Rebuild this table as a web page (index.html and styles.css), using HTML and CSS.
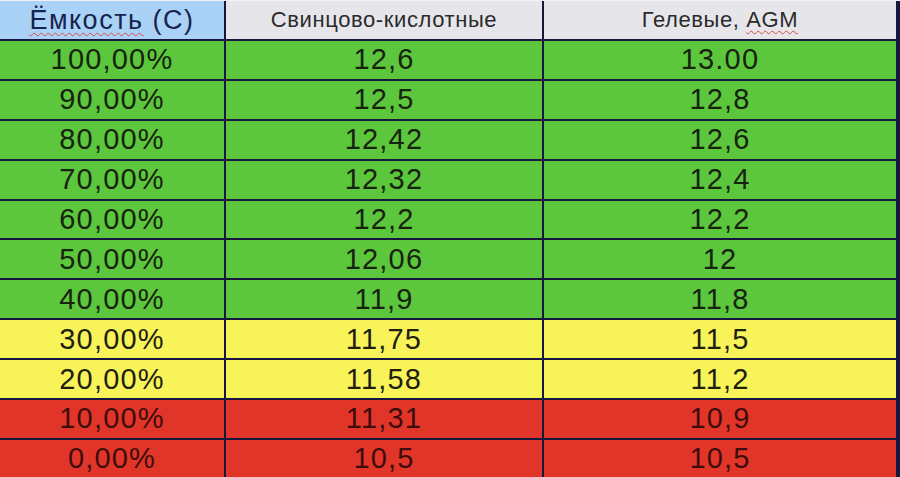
FILE: index.html
```html
<!DOCTYPE html>
<html lang="ru">
<head>
<meta charset="utf-8">
<title>Ёмкость аккумулятора</title>
<link rel="stylesheet" href="styles.css">
</head>
<body>
<div class="table">
  <div class="cell head head-a"><span><span class="spell">Ёмкость</span> (С)</span></div>
  <div class="cell head head-b">Свинцово-кислотные</div>
  <div class="cell head head-b"><span>Гелевые, <span class="spell">AGM</span></span></div>

  <div class="cell g">100,00%</div><div class="cell g">12,6</div><div class="cell g">13.00</div>
  <div class="cell g">90,00%</div><div class="cell g">12,5</div><div class="cell g">12,8</div>
  <div class="cell g">80,00%</div><div class="cell g">12,42</div><div class="cell g">12,6</div>
  <div class="cell g">70,00%</div><div class="cell g">12,32</div><div class="cell g">12,4</div>
  <div class="cell g">60,00%</div><div class="cell g">12,2</div><div class="cell g">12,2</div>
  <div class="cell g">50,00%</div><div class="cell g">12,06</div><div class="cell g">12</div>
  <div class="cell g">40,00%</div><div class="cell g">11,9</div><div class="cell g">11,8</div>
  <div class="cell y">30,00%</div><div class="cell y">11,75</div><div class="cell y">11,5</div>
  <div class="cell y">20,00%</div><div class="cell y">11,58</div><div class="cell y">11,2</div>
  <div class="cell r">10,00%</div><div class="cell r">11,31</div><div class="cell r">10,9</div>
  <div class="cell r">0,00%</div><div class="cell r">10,5</div><div class="cell r">10,5</div>
</div>
</body>
</html>
```
FILE: styles.css
```css
html, body {
  margin: 0;
  padding: 0;
  background: #ffffff;
}
body {
  width: 900px;
  height: 477px;
  overflow: hidden;
  font-family: "Liberation Sans", Arial, sans-serif;
}
.table {
  display: grid;
  grid-template-columns: 224px 316px 1fr;
  grid-template-rows: 38px repeat(11, 37.9px);
  gap: 2px;
  background: #16163e;
  width: 900px;
  height: 477px;
  box-sizing: border-box;
  padding-right: 4px;
  border-top: 1px solid #f2f2f6;
}
.cell {
  display: flex;
  align-items: center;
  justify-content: center;
  font-size: 29px;
  letter-spacing: 1.2px;
  color: #17220f;
  line-height: 1;
}
.head {
  background: #e6e6ea;
  color: #2b2b2b;
  font-size: 22px;
  letter-spacing: 0.6px;
}
.head-a {
  background: #a9d2f6;
  color: #16244e;
  font-size: 27px;
  letter-spacing: 1.5px;
}
.spell {
  text-decoration: underline wavy #d94a4a;
  text-decoration-thickness: 1px;
  text-underline-offset: 3px;
}
.g {
  background: #5cc73d;
}
.y {
  background: #f9f35a;
  color: #1f1f10;
}
.r {
  background: #e2352a;
  color: #3d0d0c;
}
```
